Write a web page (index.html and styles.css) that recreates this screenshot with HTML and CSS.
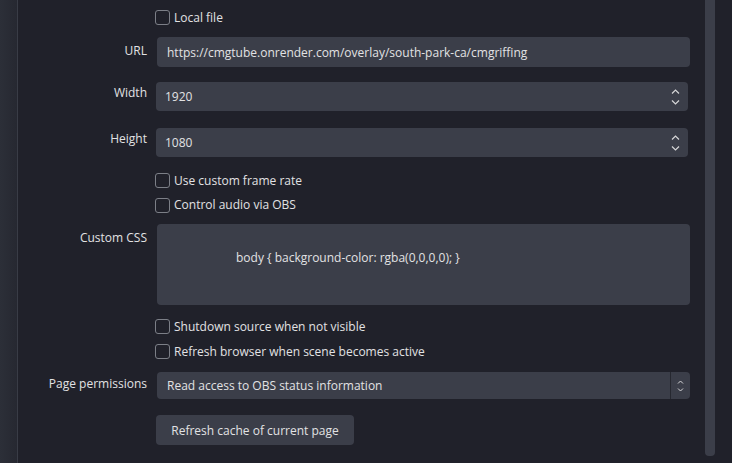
FILE: index.html
```html
<!DOCTYPE html>
<html>
<head>
<meta charset="utf-8">
<link rel="stylesheet" href="styles.css">
</head>
<body>
<div class="page">
  <div class="side"></div>
  <div class="main">
    <div class="row cbrow r-local">
      <div class="label"></div>
      <label class="check"><span class="box"></span>Local file</label>
    </div>
    <div class="row r-url">
      <div class="label l-url">URL</div>
      <div class="field input">https://cmgtube.onrender.com/overlay/south-park-ca/cmgriffing</div>
    </div>
    <div class="row r-width">
      <div class="label">Width</div>
      <div class="field input spin">1920
        <span class="arrows">
          <svg width="9" height="18" viewBox="0 0 9 18"><path d="M1 5.5 L4.5 2 L8 5.5 M1 12.5 L4.5 16 L8 12.5" fill="none" stroke="#d6d6d8" stroke-width="1.2"/></svg>
        </span>
      </div>
    </div>
    <div class="row r-height">
      <div class="label">Height</div>
      <div class="field input spin">1080
        <span class="arrows">
          <svg width="9" height="18" viewBox="0 0 9 18"><path d="M1 5.5 L4.5 2 L8 5.5 M1 12.5 L4.5 16 L8 12.5" fill="none" stroke="#d6d6d8" stroke-width="1.2"/></svg>
        </span>
      </div>
    </div>
    <div class="row cbrow r-fps">
      <div class="label"></div>
      <label class="check"><span class="box"></span>Use custom frame rate</label>
    </div>
    <div class="row cbrow r-audio">
      <div class="label"></div>
      <label class="check"><span class="box"></span>Control audio via OBS</label>
    </div>
    <div class="row r-css">
      <div class="label l-css">Custom CSS</div>
      <div class="field area"><span class="code">body { background-color: rgba(0,0,0,0); }</span></div>
    </div>
    <div class="row cbrow r-shut">
      <div class="label"></div>
      <label class="check"><span class="box"></span>Shutdown source when not visible</label>
    </div>
    <div class="row cbrow r-refresh">
      <div class="label"></div>
      <label class="check"><span class="box"></span>Refresh browser when scene becomes active</label>
    </div>
    <div class="row r-perm">
      <div class="label l-perm">Page permissions</div>
      <div class="field select">
        <span class="sel-text">Read access to OBS status information</span>
        <span class="sel-btn">
          <svg width="7" height="14" viewBox="0 0 7 14"><path d="M1 4.5 L3.5 2 L6 4.5 M1 9.5 L3.5 12 L6 9.5" fill="none" stroke="#d6d6d8" stroke-width="1"/></svg>
        </span>
      </div>
    </div>
    <div class="row r-btn">
      <div class="label"></div>
      <div class="btn">Refresh cache of current page</div>
    </div>
  </div>
  <div class="scroll"><div class="thumb"></div></div>
</div>
</body>
</html>
```
FILE: styles.css
```css
html, body {
  margin: 0;
  padding: 0;
  background: #20212a;
}
body {
  font-family: "Open Sans", "Noto Sans", "DejaVu Sans", sans-serif;
  font-size: 12px;
  color: #e2e2e4;
}
.page {
  display: flex;
  width: 732px;
  height: 463px;
  overflow: hidden;
}
.side {
  width: 17px;
  flex: none;
  background: linear-gradient(90deg, #2c2f38 0%, #262831 100%);
  border-right: 1px solid #393c46;
}
.main {
  flex: 1;
  padding: 5px 15px 0 0;
  display: flex;
  flex-direction: column;
}
.row {
  display: flex;
  align-items: flex-start;
  flex: none;
}
.label {
  width: 129px;
  flex: none;
  text-align: right;
  margin-right: 10px;
  line-height: 18px;
  padding-top: 2px;
}
.field {
  flex: 1;
  background: #3b3e49;
  border-radius: 4px;
  box-sizing: border-box;
}
.input {
  display: flex;
  align-items: center;
  padding-left: 10px;
  position: relative;
}
.spin {
  padding-left: 9px;
  margin-left: -1px;
  margin-right: 2px;
}
.arrows {
  position: absolute;
  right: 8px;
  top: 50%;
  transform: translateY(-50%);
  display: flex;
}
.cbrow {
  height: 25px;
  align-items: center;
}
.check {
  display: flex;
  align-items: center;
  line-height: 18px;
  margin-left: -2px;
}
.box {
  width: 13px;
  height: 13px;
  border: 1px solid #7c7f87;
  border-radius: 3px;
  margin-right: 4px;
  flex: none;
}
.r-url { margin-top: 7px; }
.r-url .field { height: 30px; }
.l-url { padding-top: 5px; }
.r-width { margin-top: 15px; }
.r-width .field { height: 29px; }
.r-height { margin-top: 17px; }
.r-height .field { height: 29px; }
.r-fps { margin-top: 11px; }
.r-audio { height: 24px; }
.r-css { margin-top: 7px; }
.l-css { padding-top: 5px; }
.area {
  height: 81px;
  padding: 25px 0 0 79px;
  line-height: 18px;
}
.code {
  white-space: pre;
}
.r-shut { margin-top: 9px; }
.r-perm { margin-top: 8px; }
.l-perm { padding-top: 3px; }
.select {
  height: 27px;
  display: flex;
  align-items: center;
}
.sel-text {
  flex: 1;
  padding-left: 10px;
}
.sel-btn {
  width: 20px;
  height: 100%;
  border-left: 1px solid #262830;
  display: flex;
  align-items: center;
  justify-content: center;
  box-sizing: border-box;
}
.r-btn { margin-top: 16px; }
.btn {
  margin-left: -1px;
  height: 30px;
  width: 198px;
  box-sizing: border-box;
  background: #3b3e49;
  border-radius: 4px;
  display: flex;
  align-items: center;
  justify-content: center;
}
.scroll {
  width: 10px;
  flex: none;
  margin-right: 17px;
  padding-bottom: 7px;
  display: flex;
}
.thumb {
  flex: 1;
  background: #3b3e49;
  border-radius: 0 0 4px 4px;
}
```
